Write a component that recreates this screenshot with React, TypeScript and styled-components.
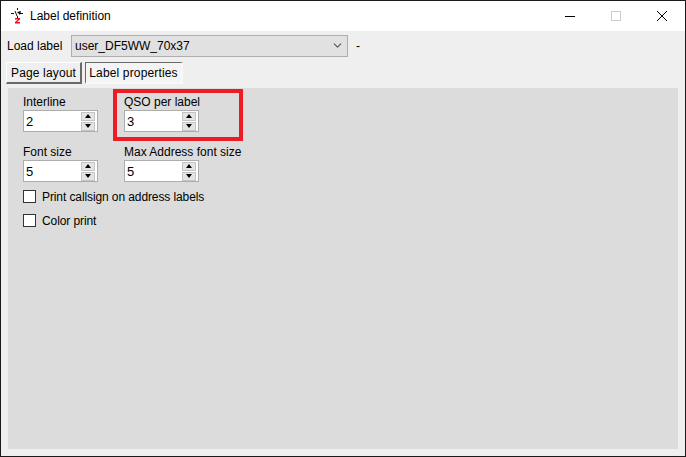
import styled, { createGlobalStyle } from 'styled-components';
import { ChevronDown } from 'lucide-react';

const GlobalStyle = createGlobalStyle`
    html, body {
        margin: 0;
        padding: 0;
        width: 686px;
        height: 457px;
        overflow: hidden;
        background: #1a1a1a;
    }
    * {
        box-sizing: border-box;
    }
`;

const Desktop = styled.div`
    width: 686px;
    height: 457px;
    padding: 1px;
    background: #1a1a1a;
    font-family: "Liberation Sans", Arial, sans-serif;
    font-size: 12px;
    color: #000;
`;

const Window = styled.div`
    display: flex;
    flex-direction: column;
    width: 684px;
    height: 455px;
    background: #efefef;
`;

const TitleBar = styled.div`
    display: flex;
    align-items: center;
    height: 30px;
    padding-left: 9px;
    background: #fff;
`;

const TitleText = styled.span`
    margin-left: 5px;
    font-size: 12px;
    flex: 1;
`;

const WindowButton = styled.div`
    display: flex;
    align-items: center;
    justify-content: center;
    width: 46px;
    height: 30px;
`;

const Body = styled.div`
    display: flex;
    flex-direction: column;
    flex: 1;
    padding: 3px 7px 7px 7px;
`;

const LoadRow = styled.div`
    display: flex;
    align-items: center;
    height: 23px;
`;

const LoadLabel = styled.span`
    width: 64px;
    margin-left: -1px;
`;

const ComboBox = styled.div`
    display: flex;
    align-items: center;
    justify-content: space-between;
    width: 277px;
    height: 22px;
    padding: 0 3px;
    background: #e1e1e1;
    border: 1px solid #adadad;
`;

const Dash = styled.span`
    margin-left: 8px;
`;

const Tabs = styled.div`
    display: flex;
    gap: 3px;
    height: 26px;
    margin: 5px 0 0 -2px;
`;

const Tab = styled.div<{ $active?: boolean }>`
    display: flex;
    align-items: center;
    justify-content: center;
    height: 22px;
    letter-spacing: 0.15px;
    background: ${(p) => (p.$active ? '#f4f4f4' : '#efefef')};
    border-style: solid;
    border-width: 1px 2px 2px 1px;
    border-color: ${(p) => (p.$active ? '#696969 #f8f8f8 #f8f8f8 #696969' : '#fff #696969 #696969 #fff')};
    width: ${(p) => (p.$active ? '98px' : '76px')};
`;

const Panel = styled.div`
    display: flex;
    flex-direction: column;
    flex: 1;
    padding: 7px 15px;
    background: #dcdcdc;
`;

const FieldGrid = styled.div`
    display: grid;
    grid-template-columns: 101px auto;
    justify-content: start;
    row-gap: 5px;
`;

const Field = styled.div`
    display: flex;
    flex-direction: column;
    height: 45px;
`;

const FieldLabel = styled.span`
    height: 15px;
    line-height: 15px;
`;

const SpinBox = styled.div`
    display: flex;
    align-items: center;
    justify-content: space-between;
    width: 75px;
    height: 22px;
    padding: 0 2px;
    background: #fff;
    border: 1px solid #adadad;
    font-size: 13px;
`;

const SpinButtons = styled.div`
    display: flex;
    flex-direction: column;
    gap: 1px;
`;

const SpinButton = styled.div`
    display: flex;
    align-items: center;
    justify-content: center;
    width: 14px;
    height: 9px;
    background: #e4e4e4;
    border: 1px solid #c4c4c4;
`;

const Arrow = styled.div<{ $down?: boolean }>`
    width: 0;
    height: 0;
    border-left: 3px solid transparent;
    border-right: 3px solid transparent;
    ${(p) => (p.$down ? 'border-top: 4px solid #000;' : 'border-bottom: 4px solid #000;')}
`;

const CheckRow = styled.div`
    display: flex;
    align-items: center;
    gap: 6px;
    height: 13px;
    margin-bottom: 11px;
    letter-spacing: -0.1px;
`;

const CheckBox = styled.div`
    width: 13px;
    height: 13px;
    background: #fff;
    border: 1px solid #333;
`;

const Highlight = styled.div`
    position: absolute;
    left: 113px;
    top: 89px;
    width: 130px;
    height: 52px;
    border: 4px solid #ed1c24;
`;

const Stage = styled.div`
    position: relative;
`;

const SpinField = ({ label, value }: { label: string; value: number }) => (
    <Field>
        <FieldLabel>{label}</FieldLabel>
        <SpinBox>
            {value}
            <SpinButtons>
                <SpinButton><Arrow /></SpinButton>
                <SpinButton><Arrow $down /></SpinButton>
            </SpinButtons>
        </SpinBox>
    </Field>
);

export default function App() {
    return (
        <Stage>
            <GlobalStyle />
            <Desktop>
                <Window>
                    <TitleBar>
                        <svg width="15" height="18" viewBox="0 0 15 18">
                            <path d="M1 6.5h3M10 6.5h3M7.5 1v2M7.5 9v2M5 4l2 5" stroke="#111" strokeWidth="1" fill="none" />
                            <path d="M7 5l4-1-1 4z" fill="#111" />
                            <path d="M5 11h5v1.5l-3 2.5h3v1.5H5V15l3-2.500H5z" fill="#e8101a" />
                        </svg>
                        <TitleText>Label definition</TitleText>
                        <WindowButton>
                            <svg width="10" height="10" viewBox="0 0 10 10"><path d="M0 5.500h10" stroke="#000" /></svg>
                        </WindowButton>
                        <WindowButton>
                            <svg width="10" height="10" viewBox="0 0 10 10"><rect x=".5" y=".5" width="9" height="9" fill="none" stroke="#ccc" /></svg>
                        </WindowButton>
                        <WindowButton>
                            <svg width="10" height="10" viewBox="0 0 10 10"><path d="M0 0l10 10M10 0L0 10" stroke="#000" /></svg>
                        </WindowButton>
                    </TitleBar>
                    <Body>
                        <LoadRow>
                            <LoadLabel>Load label</LoadLabel>
                            <ComboBox>
                                user_DF5WW_70x37
                                <ChevronDown size={13} color="#555" />
                            </ComboBox>
                            <Dash>-</Dash>
                        </LoadRow>
                        <Tabs>
                            <Tab>Page layout</Tab>
                            <Tab $active>Label properties</Tab>
                        </Tabs>
                        <Panel>
                            <FieldGrid>
                                <SpinField label="Interline" value={2} />
                                <SpinField label="QSO per label" value={3} />
                                <SpinField label="Font size" value={5} />
                                <SpinField label="Max Address font size" value={5} />
                            </FieldGrid>
                            <CheckRow><CheckBox />Print callsign on address labels</CheckRow>
                            <CheckRow><CheckBox />Color print</CheckRow>
                        </Panel>
                    </Body>
                </Window>
            </Desktop>
            <Highlight />
        </Stage>
    );
}
